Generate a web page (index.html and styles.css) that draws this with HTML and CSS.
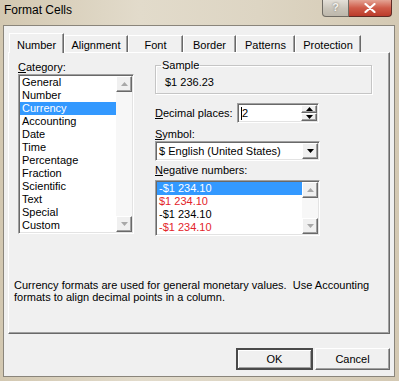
FILE: index.html
```html
<!DOCTYPE html>
<html lang="en">
<head>
    <meta charset="UTF-8">
    <title>Format Cells</title>
    <link rel="stylesheet" href="styles.css">
</head>
<body>
    <div class="window">
        <div class="titlebar">
            <span class="title">Format Cells</span>
            <div class="caption-buttons">
                <span class="btn-help">?</span>
                <span class="btn-close">
                    <svg width="12" height="10" viewBox="0 0 12 10"><path d="M1.5 1 L10.5 9 M10.5 1 L1.5 9" stroke="#fff" stroke-width="2.2" stroke-linecap="round"/></svg>
                </span>
            </div>
        </div>
        <div class="client">
            <div class="tabs">
                <div class="tab active" style="width:55px">Number</div>
                <div class="tab" style="width:64px">Alignment</div>
                <div class="tab" style="width:55px">Font</div>
                <div class="tab" style="width:53px">Border</div>
                <div class="tab" style="width:59px">Patterns</div>
                <div class="tab" style="width:66px">Protection</div>
            </div>
            <div class="panel">
                <div class="columns">
                    <div class="col-left">
                        <div class="label"><u>C</u>ategory:</div>
                        <div class="listbox category-list">
                            <ul class="items">
                                <li>General</li>
                                <li>Number</li>
                                <li class="selected">Currency</li>
                                <li>Accounting</li>
                                <li>Date</li>
                                <li>Time</li>
                                <li>Percentage</li>
                                <li>Fraction</li>
                                <li>Scientific</li>
                                <li>Text</li>
                                <li>Special</li>
                                <li>Custom</li>
                            </ul>
                            <div class="scrollbar">
                                <span class="sb-btn"><svg width="7" height="4" viewBox="0 0 7 4"><path d="M3.5 0 L7 4 L0 4 Z" fill="#a8a8a8"/></svg></span>
                                <span class="sb-btn"><svg width="7" height="4" viewBox="0 0 7 4"><path d="M0 0 L7 0 L3.5 4 Z" fill="#a8a8a8"/></svg></span>
                            </div>
                        </div>
                    </div>
                    <div class="col-right">
                        <fieldset class="sample">
                            <legend>Sample</legend>
                            <div class="sample-value">$1 236.23</div>
                        </fieldset>
                        <div class="decimal-row">
                            <span class="decimal-label"><u>D</u>ecimal places:</span>
                            <div class="spin">
                                <span class="spin-value"><span class="caret"></span>2</span>
                                <div class="spin-buttons">
                                    <span class="spin-btn"><svg width="7" height="4" viewBox="0 0 7 4"><path d="M3.5 0 L7 4 L0 4 Z" fill="#000"/></svg></span>
                                    <span class="spin-btn"><svg width="7" height="4" viewBox="0 0 7 4"><path d="M0 0 L7 0 L3.5 4 Z" fill="#000"/></svg></span>
                                </div>
                            </div>
                        </div>
                        <div class="label symbol-label"><u>S</u>ymbol:</div>
                        <div class="select">
                            <span class="select-value">$ English (United States)</span>
                            <span class="select-btn"><svg width="7" height="4" viewBox="0 0 7 4"><path d="M0 0 L7 0 L3.5 4 Z" fill="#000"/></svg></span>
                        </div>
                        <div class="label negative-label"><u>N</u>egative numbers:</div>
                        <div class="listbox negative-list">
                            <ul class="items">
                                <li class="selected">-$1 234.10</li>
                                <li class="red">$1 234.10</li>
                                <li>-$1 234.10</li>
                                <li class="red">-$1 234.10</li>
                            </ul>
                            <div class="scrollbar">
                                <span class="sb-btn"><svg width="7" height="4" viewBox="0 0 7 4"><path d="M3.5 0 L7 4 L0 4 Z" fill="#a8a8a8"/></svg></span>
                                <span class="sb-btn"><svg width="7" height="4" viewBox="0 0 7 4"><path d="M0 0 L7 0 L3.5 4 Z" fill="#a8a8a8"/></svg></span>
                            </div>
                        </div>
                    </div>
                </div>
                <p class="description">Currency formats are used for general monetary values.&nbsp; Use Accounting formats to align decimal points in a column.</p>
            </div>
            <div class="dialog-buttons">
                <button class="button default">OK</button>
                <button class="button">Cancel</button>
            </div>
        </div>
    </div>
</body>
</html>
```

FILE: styles.css
```css
* {
    box-sizing: border-box;
}

body {
    margin: 0;
    font-family: "Liberation Sans", Arial, sans-serif;
    font-size: 11px;
    color: #000;
    background-color: #d6ccb7;
}

.window {
    width: 399px;
    height: 381px;
    display: flex;
    flex-direction: column;
    background: linear-gradient(90deg, #d3c8b1 0%, #e2dbcb 35%, #ddd5c3 65%, #d4c9b3 100%);
}

.titlebar {
    height: 25px;
    display: flex;
    justify-content: space-between;
    align-items: flex-start;
}

.title {
    padding: 3px 0 0 4px;
    font-size: 12px;
    line-height: 14px;
}

.caption-buttons {
    display: flex;
    margin-right: 7px;
}

.btn-help {
    width: 27px;
    height: 17px;
    border: 1px solid #6f6b63;
    border-top: none;
    border-radius: 0 0 0 4px;
    background: linear-gradient(#e4e0d8, #c9c4b9 55%, #bdb7ab);
    color: #f4f2ee;
    font-size: 11px;
    font-weight: bold;
    line-height: 15px;
    text-align: center;
    text-shadow: 0 0 2px #6f6b63;
}

.btn-close {
    width: 43px;
    height: 17px;
    border: 1px solid #5e2b25;
    border-top: none;
    border-left: none;
    border-radius: 0 0 4px 0;
    background: linear-gradient(#e4a494, #cf5b48 50%, #bb3b2b);
    display: flex;
    align-items: center;
    justify-content: center;
}

.client {
    flex: 1;
    margin: 0 4px 4px 3px;
    padding: 7px 4px 0 4px;
    background-color: #f0f0f0;
    border: 1px solid #8a857b;
}

.tabs {
    display: flex;
    align-items: flex-end;
    height: 19px;
    padding-left: 1px;
}

.tab {
    height: 17px;
    padding-top: 3px;
    line-height: 13px;
    text-align: center;
    background-color: #f0f0f0;
    border-top: 1px solid #fff;
    border-left: 1px solid #fff;
    border-right: 1px solid #696969;
    box-shadow: inset -1px 0 #a0a0a0;
}

    .tab.active {
        position: relative;
        z-index: 1;
        height: 20px;
        margin-bottom: -1px;
        padding-top: 5px;
    }

.panel {
    height: 282px;
    padding: 8px 0 0 5px;
    border: 1px solid;
    border-color: #fff #696969 #696969 #fff;
    box-shadow: inset -1px -1px #a0a0a0;
}

.columns {
    display: flex;
    gap: 21px;
    margin-left: 4px;
}

.label {
    height: 13px;
    line-height: 13px;
}

.listbox {
    display: flex;
    background-color: #fff;
    border: 1px solid;
    border-color: #a0a0a0 #fff #fff #a0a0a0;
    box-shadow: inset 1px 1px #696969, inset -1px -1px #e3e3e3;
    padding: 1px;
}

.category-list {
    width: 116px;
    height: 160px;
}

.negative-list {
    width: 165px;
    height: 56px;
}

.items {
    flex: 1;
    margin: 0;
    padding: 0;
    list-style: none;
}

    .items li {
        height: 13px;
        line-height: 13px;
        padding-left: 2px;
    }

        .items li.selected {
            background-color: #3399ff;
            color: #fff;
        }

        .items li.red {
            color: #e3242b;
        }

.scrollbar {
    width: 16px;
    display: flex;
    flex-direction: column;
    justify-content: space-between;
    background-color: #f7f7f7;
}

.sb-btn, .spin-btn, .select-btn {
    display: flex;
    align-items: center;
    justify-content: center;
    background-color: #f0f0f0;
    border: 1px solid;
    border-color: #fff #696969 #696969 #fff;
    box-shadow: inset -1px -1px #a0a0a0;
}

.sb-btn {
    height: 16px;
}

.col-right {
    width: 217px;
}

.sample {
    margin: -2px 0 0 0;
    padding: 0 0 1px 9px;
    height: 35px;
    border: 1px solid #c5c5c5;
    box-shadow: 1px 1px #fff, inset 1px 1px #fff;
}

    .sample legend {
        padding: 0 1px;
        margin-left: -4px;
        line-height: 13px;
    }

.sample-value {
    padding-top: 4px;
    line-height: 13px;
}

.decimal-row {
    display: flex;
    align-items: center;
    height: 20px;
    margin-top: 9px;
}

.decimal-label {
    width: 82px;
}

.spin, .select {
    display: flex;
    height: 20px;
    background-color: #fff;
    border: 1px solid;
    border-color: #a0a0a0 #fff #fff #a0a0a0;
    box-shadow: inset 1px 1px #696969, inset -1px -1px #e3e3e3;
    padding: 1px;
}

.spin {
    width: 82px;
}

.spin-value {
    flex: 1;
    display: flex;
    align-items: center;
    padding-left: 2px;
}

.caret {
    width: 1px;
    height: 13px;
    background-color: #000;
}

.spin-buttons {
    width: 16px;
    display: flex;
    flex-direction: column;
}

.spin-btn {
    flex: 1;
}

.symbol-label {
    margin-top: 5px;
}

.select {
    width: 165px;
}

.select-value {
    flex: 1;
    padding-left: 2px;
    line-height: 16px;
}

.select-btn {
    width: 16px;
}

.negative-label {
    margin-top: 3px;
    margin-bottom: 3px;
}

.description {
    margin: 43px 0 0 0;
    line-height: 12px;
    width: 370px;
}

.dialog-buttons {
    display: flex;
    justify-content: flex-end;
    gap: 2px;
    margin-top: 14px;
}

.button {
    width: 75px;
    height: 22px;
    padding: 0;
    font-family: inherit;
    font-size: 11px;
    color: #000;
    background-color: #f0f0f0;
    border: 1px solid;
    border-color: #fff #696969 #696969 #fff;
    box-shadow: inset -1px -1px #a0a0a0;
}

    .button.default {
        width: 77px;
        border: 2px solid;
        border-color: #4a4a4a;
        box-shadow: inset 1px 1px #fff, inset -1px -1px #a0a0a0;
    }
```
